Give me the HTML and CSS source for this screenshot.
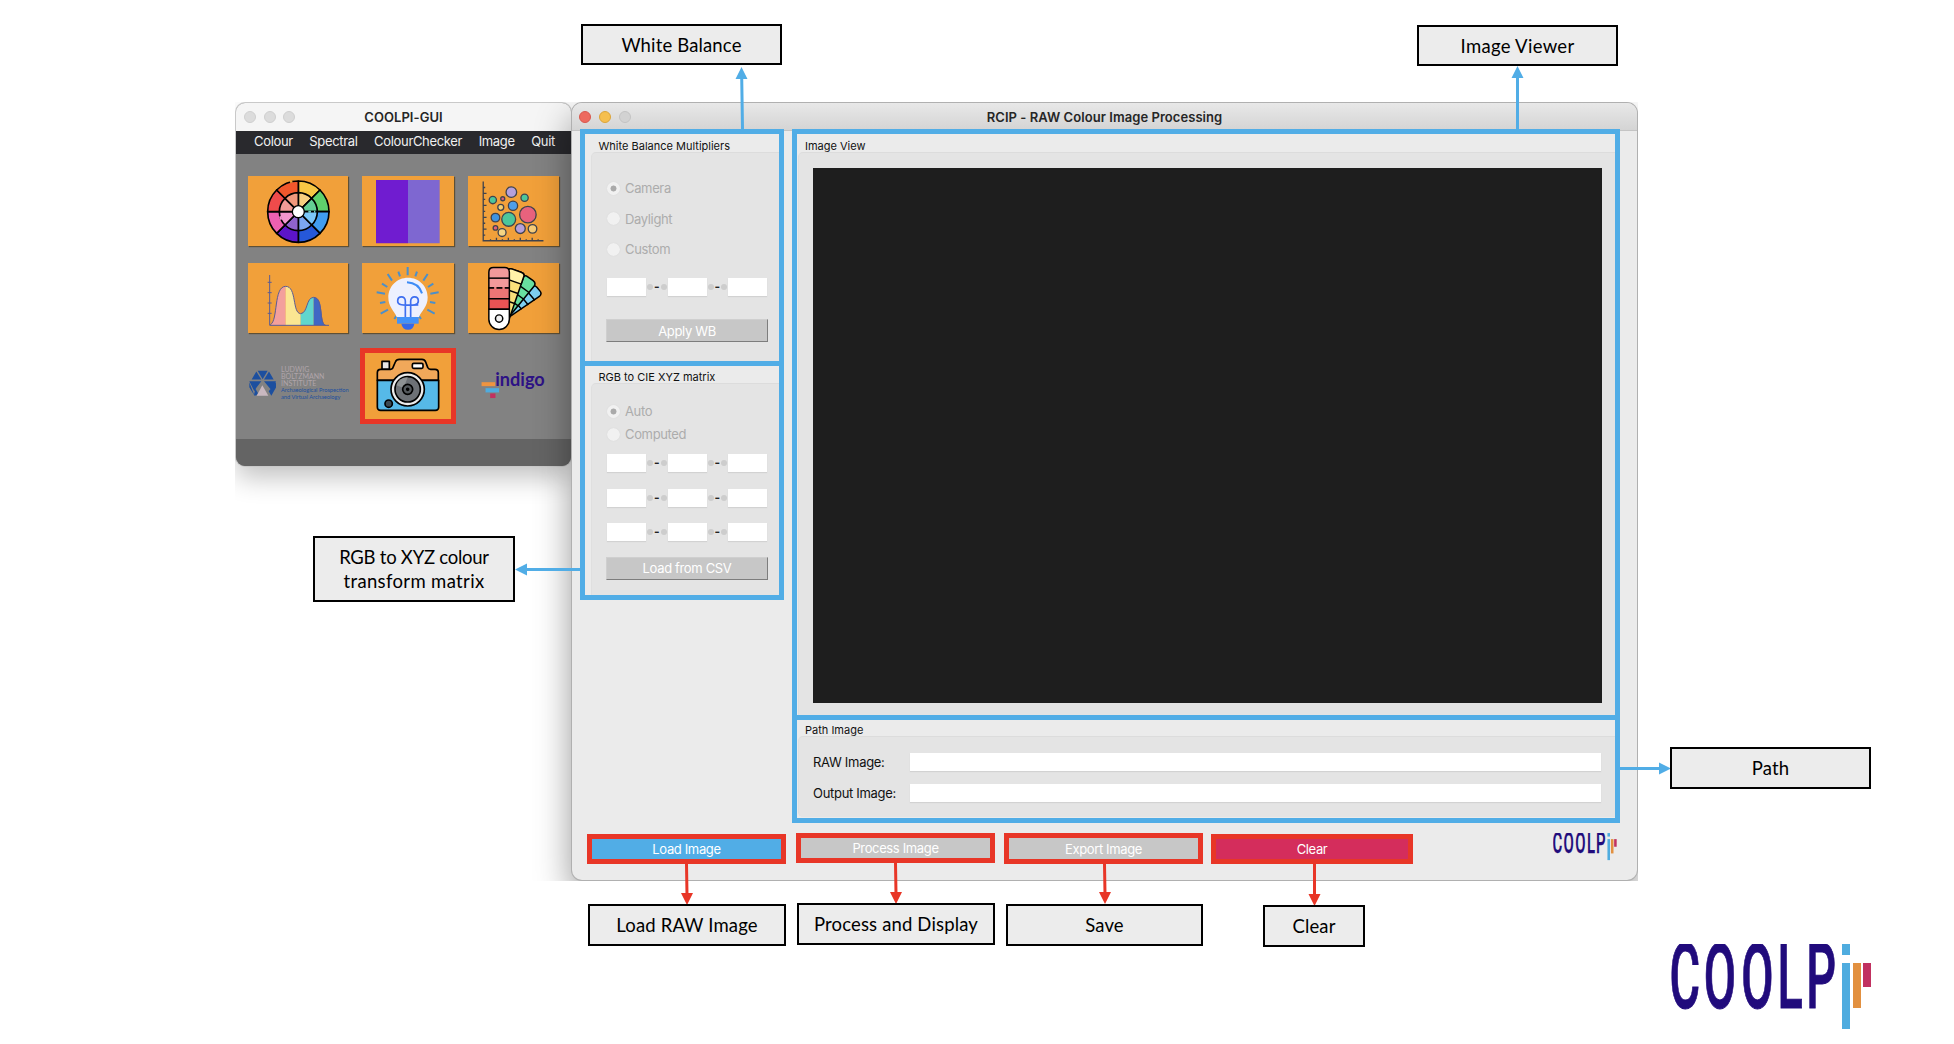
FILE: index.html
```html
<!DOCTYPE html>
<html lang="en">
<head>
<meta charset="utf-8">
<title>RCIP - RAW Colour Image Processing</title>
<link rel="stylesheet" href="styles.css">
</head>
<body>
<main class="canvas">
  <div class="desktop">
    <section class="window gui">
      <header class="titlebar">
        <div class="lights"><i></i><i></i><i></i></div>
        <h1>COOLPI-GUI</h1>
      </header>
      <nav class="menu"><span>Colour</span><span>Spectral</span><span>ColourChecker</span><span>Image</span><span>Quit</span></nav>
      <div class="tiles">
        <div class="tile">
          <svg viewBox="69 258 300 210">
            <g transform="translate(220 365)">
              <g stroke="#000" stroke-width="5" stroke-linejoin="round">
                <path fill="#f7c644" d="M0 0V-92A92 92 0 0 1 65-65Z"/>
                <path fill="#5fd16c" d="M0 0L65-65A92 92 0 0 1 92 0Z"/>
                <path fill="#409df0" d="M0 0H92A92 92 0 0 1 65 65Z"/>
                <path fill="#2658d9" d="M0 0L65 65A92 92 0 0 1 0 92Z"/>
                <path fill="#5c15c9" d="M0 0V92A92 92 0 0 1-65 65Z"/>
                <path fill="#ee60b2" d="M0 0L-65 65A92 92 0 0 1-92 0Z"/>
                <path fill="#ef4b4b" d="M0 0H-92A92 92 0 0 1-65-65Z"/>
                <path fill="#f0572c" d="M0 0L-65-65A92 92 0 0 1 0-92Z"/>
                <path fill="#f7cf80" d="M0 0V-57A57 57 0 0 1 40-40Z"/>
                <path fill="#64cf94" d="M0 0L40-40A57 57 0 0 1 57 0Z"/>
                <path fill="#7cc7f9" d="M0 0H57A57 57 0 0 1 40 40Z"/>
                <path fill="#7ca5f1" d="M0 0L40 40A57 57 0 0 1 0 57Z"/>
                <path fill="#8f63cd" d="M0 0V57A57 57 0 0 1-40 40Z"/>
                <path fill="#f296cd" d="M0 0L-40 40A57 57 0 0 1-57 0Z"/>
                <path fill="#f29b96" d="M0 0H-57A57 57 0 0 1-40-40Z"/>
                <path fill="#f2987c" d="M0 0L-40-40A57 57 0 0 1 0-57Z"/>
              </g>
              <path d="M-25-89L-18-91" stroke="#f0a03a" stroke-width="7"/>
              <path d="M-55 14L-51 24" stroke="#f296cd" stroke-width="6"/>
              <path d="M30 0h8M47 0h4" stroke="#6fcbc6" stroke-width="6"/>
              <circle r="18" fill="#fff" stroke="#000" stroke-width="4"/>
            </g>
          </svg>
        </div>
        <div class="tile">
          <svg viewBox="411 258 276 210"><path fill="#701cd0" d="M453 270h96v190h-96z"/><path fill="#7e67d1" d="M549 270h95v190h-95z"/></svg>
        </div>
        <div class="tile">
          <svg viewBox="729 258 275 210">
            <path d="M775 274V453H957M775 292h6M775 310h10M775 328h6M775 346h10M775 364h6M775 382h10M775 400h6M775 418h10M775 436h6M797 453v-5M815 453v-9M833 453v-5M851 453v-9M869 453v-5M887 453v-9M905 453v-5M923 453v-9M941 453v-5" fill="none" stroke="#40434d" stroke-width="4"/>
            <g stroke="#40434d" stroke-width="4">
              <circle cx="860" cy="306" r="16" fill="#b5a0da"/><circle cx="900" cy="323" r="11" fill="#4cc69b"/>
              <circle cx="804" cy="330" r="11" fill="#4cc69b"/><circle cx="834" cy="326" r="6" fill="#e0607c"/>
              <circle cx="828" cy="352" r="9" fill="#f5d070"/><circle cx="865" cy="347" r="14" fill="#4e9eea"/>
              <circle cx="812" cy="383" r="13" fill="#3f93df"/><circle cx="852" cy="388" r="21" fill="#4cc69b"/>
              <circle cx="910" cy="374" r="25" fill="#e8627d"/><circle cx="812" cy="414" r="7" fill="#e0607c"/>
              <circle cx="832" cy="428" r="12" fill="#f5d583"/><circle cx="887" cy="416" r="15" fill="#b5a0da"/>
              <circle cx="924" cy="417" r="13" fill="#f5cb78"/>
            </g>
          </svg>
        </div>
        <div class="tile">
          <svg viewBox="69 39 300 210">
            <path fill="#f3a09c" d="M136 226C160 212 145 109 182 109V226z"/>
            <path fill="#fbe692" d="M182 109C216 109 201 190 227 191V226H182z"/>
            <path fill="#61d6cd" d="M227 191C249 189 243 142 266 142V226H227z"/>
            <path fill="#4067c4" d="M266 142C297 142 284 213 300 226H266z"/>
            <path d="M136 224C160 212 145 109 182 109C216 109 201 190 227 191C249 189 243 142 266 142C297 142 280 220 302 226M134 75V226H312M128 97h12M128 128h12M128 159h12M128 190h12" fill="none" stroke="#5c5c94" stroke-width="3"/>
          </svg>
        </div>
        <div class="tile">
          <svg viewBox="411 39 276 210">
            <path d="M548 51v25M520 65l5 14M576 65l-5 14M488 72l13 20M608 72l-13 20M471 101l16 10M625 101l-16 10M455 127l25 4M641 127l-25 4M465 159l16-3M631 159l-16-3M467 191l22-12M629 191l-22-12M508 207l6-9M588 207l-6-9" stroke="#4c8fc9" stroke-width="6"/>
            <path d="M549 83C516 83 490 109 490 142C490 172 507 181 515 201H582C590 181 608 172 608 142C608 109 582 83 549 83Z" fill="#edf0fe"/>
            <path d="M546 97Q581 99 591 130" fill="none" stroke="#3e8cf6" stroke-width="6"/>
            <path d="M541 201V153C541 136 518 137 518 153C518 169 541 165 580 165M557 201V153C557 136 580 137 580 153C580 169 557 165 530 165" fill="none" stroke="#3e6ef0" stroke-width="5"/>
            <path d="M516 201h65v20h-65z" fill="#4392f9"/><path d="M529 221h39q-2 18-19 18t-20-18z" fill="#3568e8"/>
          </svg>
        </div>
        <div class="tile">
          <svg viewBox="729 39 275 210" stroke="#000" stroke-width="4.500" stroke-linejoin="round">
            <g transform="rotate(50 833 207)"><path fill="#7ecff0" d="M815 78q0-12 12-12h14q12 0 12 12L840 207z"/><path d="M816 96h37M818 120h33M821 144h27"/></g>
            <g transform="rotate(36 831 207)"><path fill="#68dfa0" d="M808 70q0-12 12-12h20q12 0 12 12L844 207H816z"/><path d="M809 94h42M810 120h40M812 146h36"/></g>
            <g transform="rotate(19 823 207)"><path fill="#fbe17a" d="M800 62q0-10 12-10h28q12 0 12 10V207H800z"/><path fill="#fff2a8" d="M800 62q0-10 12-10h28q12 0 12 10v24h-52z"/><path d="M800 116h52M800 148h52"/></g>
            <path fill="#f29a9b" d="M792 66q0-14 14-14h34q14 0 14 14v48h-62z"/>
            <path fill="#ed7576" d="M792 114h62v32h-62z"/><path fill="#e95354" d="M792 146h62v32h-62z"/><path d="M792 84h62"/>
            <path fill="#fff" d="M792 178h62v30a31 31 0 0 1-62 0z"/><circle cx="823" cy="206" r="11" fill="#f1f1f1"/>
            <path d="M808 114h7M833 114h7" stroke="#ee8182" stroke-width="6"/>
          </svg>
        </div>
        <div class="brand">
          <svg viewBox="69 348 300 104" class="lbi">
            <g fill="#1c4f9f"><path d="M98 362h30l-15 25zM94 364l15 24H80zM132 364l14 24h-29zM73 393h36l-15 20-6 10zM117 393h36l-13 28zM73 396l15 40-15-25zM153 396v16l-14 25-8-14z"/><path d="M91 415l8 14-5 7h-7z"/></g>
            <path d="M112 405l18 32H95z" fill="#c9b8c0"/>
            <g fill="#b0a5aa" font-size="21"><text x="168" y="367" textLength="85" lengthAdjust="spacingAndGlyphs">LUDWIG</text><text x="168" y="388" textLength="130" lengthAdjust="spacingAndGlyphs">BOLTZMANN</text><text x="168" y="409" textLength="106" lengthAdjust="spacingAndGlyphs">INSTITUTE</text></g>
            <g fill="#1c4f9f" font-size="17"><text x="168" y="427" textLength="203" lengthAdjust="spacingAndGlyphs">Archaeological Prospection</text><text x="168" y="446" textLength="178" lengthAdjust="spacingAndGlyphs">and Virtual Archaeology</text></g>
          </svg>
        </div>
        <div class="tile camera">
          <svg viewBox="420 309 258 198" stroke="#000" stroke-width="5" stroke-linejoin="round" stroke-linecap="round">
            <path fill="#e8e8e8" d="M471 334h22v24h-22z"/>
            <path fill="#f1a85a" d="M457 391V368q0-10 10-10h30q6 0 8-8l6-14q3-8 12-8h68q8 0 11 8l6 16q3 6 9 6h13q10 0 10 10v23z"/>
            <path fill="#56b9e8" d="M457 391h184v80q0 10-10 10H467q-10 0-10-10z"/>
            <rect x="562" y="340" width="32" height="15" rx="4" fill="#fff"/>
            <circle cx="548" cy="418" r="50" fill="#ececec"/><circle cx="548" cy="418" r="38" fill="#6d7176"/>
            <path d="M548 382a36 36 0 0 0-34 24l22 8z" fill="#8d9193" stroke="none"/>
            <circle cx="548" cy="418" r="15" fill="#54595d"/><circle cx="548" cy="418" r="3" fill="#111"/><circle cx="491" cy="461" r="11" fill="#3d4a52"/>
          </svg>
        </div>
        <div class="brand">
          <svg viewBox="729 348 275 104" class="indigo">
            <path fill="#ef9440" d="M770 396h41v12h-41z"/><path fill="#4facdf" d="M782 414h41v13h-41z"/><path fill="#c13160" d="M796 430h16v14h-16z"/>
            <text x="811" y="409" textLength="150" lengthAdjust="spacingAndGlyphs">indigo</text>
          </svg>
        </div>
      </div>
      <footer class="status"></footer>
    </section>

    <section class="window rcip">
      <header class="titlebar">
        <div class="lights"><i class="red"></i><i class="yellow"></i><i></i></div>
        <h1>RCIP - RAW Colour Image Processing</h1>
      </header>
      <div class="work">
        <div class="frame settings">
          <section class="group wb">
            <h2>White Balance Multipliers</h2>
            <div class="panel">
              <label class="radio on">Camera</label>
              <label class="radio">Daylight</label>
              <label class="radio">Custom</label>
              <div class="triple"><b></b><em>-</em><b></b><em>-</em><b></b></div>
              <button>Apply WB</button>
            </div>
          </section>
          <section class="group matrix">
            <h2>RGB to CIE XYZ matrix</h2>
            <div class="panel">
              <label class="radio on">Auto</label>
              <label class="radio">Computed</label>
              <div class="triple"><b></b><em>-</em><b></b><em>-</em><b></b></div>
              <div class="triple"><b></b><em>-</em><b></b><em>-</em><b></b></div>
              <div class="triple"><b></b><em>-</em><b></b><em>-</em><b></b></div>
              <button>Load from CSV</button>
            </div>
          </section>
        </div>
        <div class="frame viewer">
          <section class="group view">
            <h2>Image View</h2>
            <div class="panel"><div class="screen"></div></div>
          </section>
          <section class="group path">
            <h2>Path Image</h2>
            <div class="panel">
              <div class="field"><span>RAW Image:</span><b></b></div>
              <div class="field"><span>Output Image:</span><b></b></div>
            </div>
          </section>
        </div>
      </div>
      <div class="actions">
        <div class="action load"><span>Load Image</span></div>
        <div class="action process"><span>Process Image</span></div>
        <div class="action export"><span>Export Image</span></div>
        <div class="action clear"><span>Clear</span></div>
        <svg class="small-logo" viewBox="0 0 201 86"><use href="#coolpi"/></svg>
      </div>
    </section>
  </div>

  <svg class="arrows" width="1954" height="1044">
    <g stroke="#51ade6" stroke-width="3" fill="none"><path d="M742.500 129L741.700 77M1517.500 129V76M580 569.500H525M1620 768.500H1660"/></g>
    <g fill="#51ade6"><path d="M741.500 67l6 12h-12zM1517.500 66l6 12h-12zM515 569.500l12-6v12zM1671 768.500l-12-6v12z"/></g>
    <g stroke="#e83627" stroke-width="3" fill="none"><path d="M686.500 864L687 895M895.500 863L896 894M1104.500 864L1105 894M1314.500 864V895"/></g>
    <g fill="#e83627"><path d="M687 905l-6-12h12zM896 904l-6-12h12zM1105 904l-6-12h12zM1314.500 906l-6-12h12z"/></g>
  </svg>

  <div class="note n-wb">White Balance</div>
  <div class="note n-viewer">Image Viewer</div>
  <div class="note n-matrix"><span>RGB to XYZ colour</span><span>transform matrix</span></div>
  <div class="note n-path">Path</div>
  <div class="note n-load">Load RAW Image</div>
  <div class="note n-process">Process and Display</div>
  <div class="note n-save">Save</div>
  <div class="note n-clear">Clear</div>
  <svg class="big-logo" viewBox="0 0 201 86">
    <g id="coolpi">
      <text class="coolpi-text" transform="translate(0 64) scale(.52 1)" x="-3 63 135 205 260">COOLP</text>
      <rect x="171" y="0" width="8" height="11" fill="#4facdf"/>
      <rect x="171" y="19" width="8" height="66" fill="#4facdf"/>
      <rect x="182" y="19" width="8" height="45" fill="#e29040"/>
      <rect x="192" y="19" width="8" height="24" fill="#c13160"/>
    </g>
  </svg>
</main>
</body>
</html>
```
FILE: styles.css
```css
* { box-sizing: border-box; }
body { margin: 0; background: #fff; font-family: Inter, "Liberation Sans", sans-serif; font-size: 13px; color: #111; }
h1, h2 { margin: 0; font-weight: 400; }
svg { display: block; }
.canvas { position: relative; width: 1954px; height: 1044px; overflow: hidden; }

.desktop { position: absolute; left: 235px; top: 102px; width: 1403px; height: 779px; overflow: hidden; }
.window { position: absolute; display: flex; flex-direction: column; overflow: hidden; }
.gui { left: 1px; top: 1px; width: 335px; height: 363px; border-radius: 9px; background: #828282; box-shadow: 0 0 0 1px #c9c9c9, 0 12px 26px rgba(0, 0, 0, .24); }
.rcip { left: 337px; top: 1px; width: 1065px; height: 777px; border-radius: 10px; background: #ebebeb; box-shadow: 0 0 0 1px #b0b0b0, 0 16px 36px rgba(0, 0, 0, .42); }

.titlebar { flex: none; height: 28px; display: grid; grid-template-columns: 1fr auto 1fr; align-items: center; background: #f5f5f5; }
.rcip .titlebar { background: linear-gradient(#e8e8e8, #d4d4d4); border-bottom: 1px solid #c4c4c4; }
.titlebar h1 { font-size: 13px; font-weight: 600; letter-spacing: .06px; color: #262626; white-space: nowrap; }
.lights { display: flex; gap: 7.500px; padding-left: 8px; }
.rcip .lights { gap: 8px; padding-left: 7px; }
.lights i { width: 12px; height: 12px; border-radius: 50%; background: #dcdcdc; border: 1px solid #cfcfcf; }
.rcip .lights i { background: #d2d2d2; border-color: #c3c3c3; }
.rcip .lights .red { background: #ed6a5f; border-color: #d8584e; }
.rcip .lights .yellow { background: #f5bf4f; border-color: #dba43a; }

.menu { flex: none; height: 23px; display: flex; align-items: center; gap: 16.500px; padding: 0 0 3px 18px; background: #29292d; color: #f0f0f0; letter-spacing: -.33px; }
.tiles { flex: 1; display: grid; grid-template-columns: 100px 92px 91px; grid-template-rows: 70px 70px 76px; column-gap: 14px; row-gap: 17px; padding: 22px 0 0 12px; }
.tile { background: #f1a03a; box-shadow: 1px 1px 1px #5e5036; }
.tile svg { width: 100%; height: 100%; }
.camera { margin: -2px -2px 0; height: 76px; border: 5px solid #e83627; box-shadow: none; }
.brand { padding-top: 16px; }
.brand svg { width: 100%; height: 35px; overflow: visible; }
.lbi { font-family: Lato, sans-serif; }
.indigo text { font: 700 58px Lato, sans-serif; fill: #2d1285; }
.status { height: 27px; background: #646464; }

.work { display: flex; gap: 8px; align-items: flex-start; padding-left: 8px; margin-top: -2px; }
.frame { border: 5px solid #51ade6; }
.settings { width: 204px; height: 471px; }
.viewer { width: 828px; height: 694px; }
.group { display: flex; flex-direction: column; }
.group h2 { height: 18px; line-height: 24px; font-size: 11px; padding-left: 13.500px; color: #111; white-space: nowrap; }
.group.viewer h2, .viewer .group h2 { padding-left: 8px; }
.panel { flex: 1; background: #e4e4e4; border-top: 1px solid #dcdcdc; border-left: 1px solid #dfdfdf; border-top-left-radius: 5px; display: flex; flex-direction: column; }
.settings .panel { margin-left: 6px; padding-left: 15px; }
.viewer .panel { margin-left: 1px; padding-left: 14px; }
.wb { height: 227px; }
.matrix, .path { border-top: 5px solid #51ade6; }
.matrix { height: 234px; }
.wb .panel { padding-top: 20px; }
.matrix .panel { padding-top: 15.500px; }

.radio { flex: none; height: 30.500px; display: flex; align-items: center; gap: 5px; color: #acacac; letter-spacing: -.35px; }
.matrix .radio { height: 23px; }
.group.matrix h2 { line-height: 22px; height: 17px; }
.radio::before { content: ""; width: 13px; height: 13px; border-radius: 50%; background: #f1f1f1; box-shadow: 0 0 1px #ccc; }
.radio.on::before { background: radial-gradient(circle, #aaa 2.700px, #f1f1f1 3.300px); }
.triple { flex: none; display: flex; align-items: center; height: 18px; width: 160px; }
.triple b { flex: 1; height: 18px; background: #fff; box-shadow: 0 1px 1px #d2d2d2; }
.triple em { width: 21.500px; display: flex; align-items: center; justify-content: space-between; padding: 0 1px; font-style: normal; font-weight: 700; font-size: 12px; color: #222; line-height: 18px; }
.triple em::before, .triple em::after { content: ""; width: 6px; height: 6px; border-radius: 50%; background: #cdcdcd; }
.wb .triple { margin-top: 13.500px; }
.matrix .triple { margin-bottom: 16.500px; }
.matrix .radio + .triple { margin-top: 8.700px; }
button { flex: none; width: 162px; height: 23px; padding: 0; border: 1px solid #cfcfcf; border-right: 1px solid #7d7d7d; border-bottom: 1px solid #7d7d7d; background: #c7c7c7; color: #fff; font: 13px Inter, sans-serif; letter-spacing: -.35px; margin-left: -1px; }
.wb button { margin-top: 23px; }
.matrix button { margin-top: -1px; }

.view { height: 581px; }
.view .panel { padding-top: 15px; }
.screen { width: 789px; height: 535px; background: #1e1e1e; }
.path { height: 103px; }
.viewer .path h2 { height: 16px; line-height: 20px; }
.path .panel { padding-top: 16px; gap: 12.500px; margin-bottom: 1px; border-bottom-left-radius: 5px; }
.field { display: flex; align-items: center; height: 18px; color: #111; letter-spacing: -.3px; }
.field span { width: 97px; white-space: nowrap; }
.field b { width: 691px; height: 18px; background: #fff; box-shadow: 0 1px 1px #d2d2d2; }

.actions { display: flex; align-items: flex-start; padding: 10px 0 0 15px; }
.action { border: 5px solid #e83627; height: 30px; display: flex; align-items: center; justify-content: center; color: #fff; background: #c7c7c7; white-space: nowrap; letter-spacing: -.36px; }
.load { width: 199px; margin-top: 1px; background: #51ade6; }
.process { width: 199px; margin-left: 10px; }
.export { width: 199px; height: 31px; margin-left: 9px; }
.clear { width: 202px; margin: 1px 0 0 8px; background: #d42d5c; }
.small-logo { width: 64px; height: 27.500px; margin-left: 140px; }

.coolpi-text { font: 500 90px Roboto, "Liberation Sans", sans-serif; fill: #210b7c; stroke: #210b7c; stroke-width: 1px; }
.arrows { position: absolute; left: 0; top: 0; }
.note { position: absolute; display: flex; flex-direction: column; align-items: center; justify-content: center; border: 2px solid #000; background: #ececec; color: #000; font: 18.500px/24px Lato, sans-serif; letter-spacing: .15px; white-space: nowrap; }
.n-wb { left: 581px; top: 24px; width: 201px; height: 41px; }
.n-viewer { left: 1417px; top: 25px; width: 201px; height: 41px; letter-spacing: .3px; }
.n-matrix { left: 313px; top: 536px; width: 202px; height: 66px; }
.n-matrix span:first-child { letter-spacing: -.25px; }
.n-matrix span:last-child { letter-spacing: .35px; }
.n-path { left: 1670px; top: 747px; width: 201px; height: 42px; }
.n-load { left: 588px; top: 904px; width: 198px; height: 42px; }
.n-process { left: 797px; top: 903px; width: 198px; height: 42px; }
.n-save { left: 1006px; top: 904px; width: 197px; height: 42px; }
.n-clear { left: 1263px; top: 905px; width: 102px; height: 42px; }
.big-logo { position: absolute; left: 1671px; top: 944px; width: 201px; height: 86px; }
```
